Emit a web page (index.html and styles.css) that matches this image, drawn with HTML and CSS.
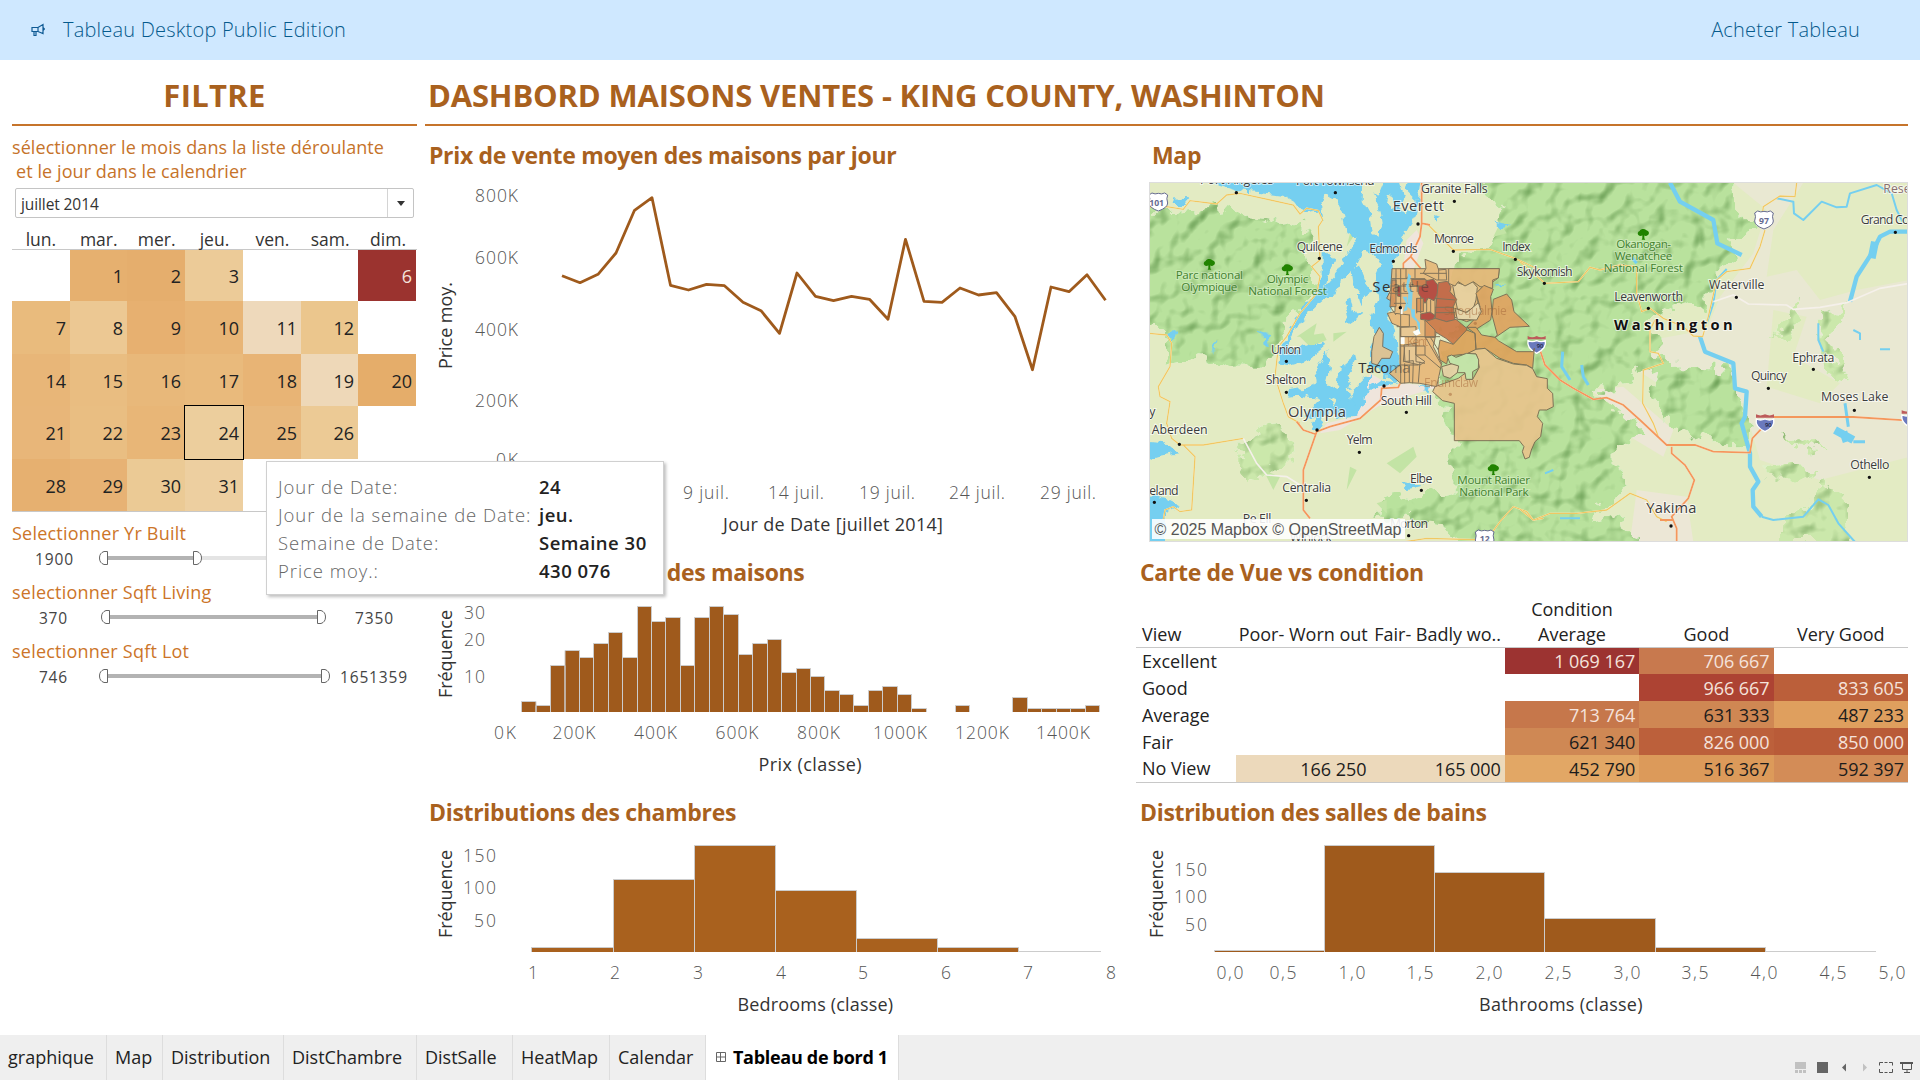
FILE: index.html
```html
<!DOCTYPE html>
<html lang="fr">
<head>
<meta charset="utf-8">
<title>Tableau de bord 1</title>
<link rel="stylesheet" href="styles.css">
</head>
<body>
<header class="banner">
  <svg class="horn" width="14" height="14" viewBox="0 0 14 14"><path d="M1 4.5H7L12 1.5V10.5L7 8.5H1ZM3 8.5V12.5H5V8.5M7 4.5V8.5M12 4.5L13.5 6L12 7.5"/></svg>
  <span class="banner-title">Tableau Desktop Public Edition</span>
  <a class="buy">Acheter Tableau</a>
</header>
<main class="dash">
  <aside class="side">
    <h1 class="side-title">FILTRE</h1>
    <p class="hint"><span class="hint-a">sélectionner le mois dans la liste déroulante</span><br><span class="hint-b">et le jour dans le calendrier</span></p>
    <div class="select"><span class="select-value">juillet 2014</span><span class="select-arrow"><i></i></span></div>
    <div class="days"><span>lun.</span><span>mar.</span><span>mer.</span><span>jeu.</span><span>ven.</span><span>sam.</span><span>dim.</span></div>
    <div class="cal">
      <b></b><b style="background:#e6b06f">1</b><b style="background:#e5ae6d">2</b><b style="background:#eccb98">3</b><b></b><b></b><b class="light" style="background:#9b332f">6</b>
      <b style="background:#e9bb7d">7</b><b style="background:#ecc893">8</b><b style="background:#e7b070">9</b><b style="background:#e8b576">10</b><b style="background:#eed9bb">11</b><b style="background:#ebc68d">12</b><b></b>
      <b style="background:#e8b678">14</b><b style="background:#e9bd81">15</b><b style="background:#e8b87a">16</b><b style="background:#e9ba7c">17</b><b style="background:#e8b475">18</b><b style="background:#eed8b8">19</b><b style="background:#e5ad6a">20</b>
      <b style="background:#e8b679">21</b><b style="background:#e9be82">22</b><b style="background:#e8b677">23</b><b class="picked" style="background:#ecce9d">24</b><b style="background:#e8b87c">25</b><b style="background:#ecca95">26</b><b></b>
      <b style="background:#e6b070">28</b><b style="background:#e7b274">29</b><b style="background:#ebca95">30</b><b style="background:#edcfa0">31</b><b></b><b></b><b></b>
    </div>
    <section class="range">
      <h3 class="r1">Selectionner Yr Built</h3>
      <svg width="405" height="26" viewBox="12 545 405 26"><path class="rail" d="M193 558H310"/><path class="span" d="M107 558H193"/><path class="grip" d="M107.500 551.500V564.500H104Q99.500 563 99.500 558T104 551.500ZM193.500 551.500V564.500H197Q201.500 563 201.500 558T197 551.500Z"/><text x="35" y="565" textLength="38">1900</text></svg>
    </section>
    <section class="range">
      <h3 class="r2">selectionner Sqft Living</h3>
      <svg width="405" height="26" viewBox="12 545 405 26"><path class="span" d="M109 558H317"/><path class="grip" d="M109.500 551.500V564.500H106Q101.500 563 101.500 558T106 551.500ZM317.500 551.500V564.500H321Q325.500 563 325.500 558T321 551.500Z"/><text x="39" y="565" textLength="28">370</text><text x="355" y="565" textLength="38">7350</text></svg>
    </section>
    <section class="range">
      <h3 class="r3">selectionner Sqft Lot</h3>
      <svg width="405" height="26" viewBox="12 545 405 26"><path class="span" d="M107 558H321"/><path class="grip" d="M107.500 551.500V564.500H104Q99.500 563 99.500 558T104 551.500ZM321.500 551.500V564.500H325Q329.500 563 329.500 558T325 551.500Z"/><text x="39" y="565" textLength="28">746</text><text x="340" y="565" textLength="67">1651359</text></svg>
    </section>
  </aside>

  <div class="content">
    <h1 class="main-title"><span>DASHBORD MAISONS VENTES - KING COUNTY, WASHINTON</span></h1>
    <div class="panels">
      <section class="panel">
        <h2 class="t1">Prix de vente moyen des maisons par jour</h2>
        <svg class="chart" width="711" height="370" viewBox="425 182 711 370">
          <g class="tick">
            <text x="475" y="202" textLength="43">800K</text><text x="475" y="264" textLength="43">600K</text><text x="475" y="336" textLength="43">400K</text><text x="475" y="407" textLength="43">200K</text><text x="496" y="466" textLength="22">0K</text>
            <text x="683" y="499" textLength="46">9 juil.</text><text x="768" y="499" textLength="56">14 juil.</text><text x="859" y="499" textLength="56">19 juil.</text><text x="949" y="499" textLength="56">24 juil.</text><text x="1040" y="499" textLength="56">29 juil.</text>
          </g>
          <text class="axis" x="723" y="531" textLength="220">Jour de Date [juillet 2014]</text>
          <text class="axis" transform="translate(451.500 369) rotate(-90)" textLength="87">Price moy.</text>
          <polyline class="line" points="562,275.7 580,282.7 598,274.3 616,253 634.500,210.3 652,197.7 670.500,285.3 688.500,290 706.500,284.3 724.500,285.7 743,302.3 761,310.7 779.500,333.3 797,273 815.500,296.3 833.500,300.7 851.500,296.3 869.500,299.3 888,319.3 905.500,239.3 924,301.3 942,302.3 960,288 978.500,295 996.500,292.7 1015,316.7 1032.500,369.7 1051,287 1069,291.7 1087,274.7 1105.500,300.3"/>
        </svg>
      </section>

      <section class="panel">
        <h2 class="tm">Map</h2>
        <svg class="map" width="759" height="360" viewBox="1149 182 759 360">
          <defs>
            <filter id="relief" x="0" y="0" width="100%" height="100%" color-interpolation-filters="sRGB">
              <feTurbulence type="fractalNoise" baseFrequency="0.060" numOctaves="3" seed="3" result="e"/>
              <feDisplacementMap in="SourceGraphic" in2="e" scale="30" xChannelSelector="R" yChannelSelector="G" result="d"/>
              <feTurbulence type="fractalNoise" baseFrequency="0.050" numOctaves="2" seed="8" result="n"/>
              <feDiffuseLighting in="n" surfaceScale="6" diffuseConstant="1.170" lighting-color="#fff" result="l"><feDistantLight azimuth="225" elevation="60"/></feDiffuseLighting>
              <feComponentTransfer in="l" result="m"><feFuncR type="linear" slope=".6" intercept=".4"/><feFuncG type="linear" slope=".42" intercept=".58"/><feFuncB type="linear" slope=".65" intercept=".35"/></feComponentTransfer>
              <feComposite in="m" in2="d" operator="in" result="s"/>
              <feBlend in="d" in2="s" mode="multiply"/>
            </filter>
            <filter id="shore" x="-5%" y="-5%" width="110%" height="110%">
              <feTurbulence type="fractalNoise" baseFrequency="0.120" numOctaves="2" seed="5" result="e"/>
              <feDisplacementMap in="SourceGraphic" in2="e" scale="9" xChannelSelector="R" yChannelSelector="G"/>
            </filter>
            <g id="tree"><path d="M0-15C8-15 9-10 14-9C19-4 17 3 10 5C6 7 4 5 3 4V13L6 17H-5L-3 13V4C-6 7-12 6-15 3C-19-3-15-8-11-9C-9-14-5-15 0-15Z"/></g>
            <g id="i90"><path d="M-26-10Q-14-4 0-10Q14-4 26-10Q31 13 0 28Q-31 13-26-10Z" fill="#6a79bd" stroke="#fff" stroke-width="4"/><path d="M-27-14V-24Q-14-17 0-24Q14-17 27-24V-14Z" fill="#bd5b5b"/><text y="13" class="shield-w">90</text></g>
            <g id="us"><path d="M-28-22L-19-28Q-10-23 0-27Q10-23 19-28L28-22Q23-12 28 2Q28 16 0 26Q-28 16-28 2Q-23-12-28-22Z" fill="#fff" stroke="#666b91" stroke-width="3"/></g>
          </defs>
          <rect x="1149" y="182" width="759" height="360" fill="#e3ebc3"/>
          <g transform="translate(1520 170) scale(.333333)">
            <path fill="#e9e8d2" d="M640 38H1170V860L900 930L720 870L670 700L430 650L350 600L340 520L560 480L600 380L700 250L740 120Z"/>
            <path fill="#e3ebc3" d="M850 38H1170V330L1010 360L900 390L830 300L740 320L760 180ZM760 420L860 440L820 560L960 640L900 700L740 650ZM430 850L690 870L700 1000L560 1110H450L520 980Z"/>
            <path fill="#ece7d6" d="M210 660L310 650L460 780L430 860L330 800L300 720ZM350 960L500 980L520 1116H330Z"/>
          </g>
          <g filter="url(#relief)">
            <g transform="translate(1140 170) scale(.333333)">
              <path fill="#b9e29d" d="M0 130L100 125L250 105L310 140L480 170L520 300L530 370L460 440L390 560L370 590H250L220 550L70 580L95 500L0 480Z"/>
              <path fill="#b9e29d" d="M1000 0H1210V1160H960L900 1060L720 1040L730 990L940 960V820L900 680L940 400L960 260L1050 220L1080 120Z"/>
              <path fill="#cbe8ab" d="M290 830L390 770L450 790L460 870L420 910L360 890L310 930Z"/>
            </g>
            <g transform="translate(1520 170) scale(.333333)">
              <path fill="#b9e29d" d="M0 0H640L650 100L690 170L600 290L560 400L460 410L390 460L400 530L470 600L620 590L680 690L690 820L560 820L460 760L400 700L420 620L350 580L340 640L220 660L300 730L380 800L290 830L290 900L320 960L230 1010L220 1060L310 1030L360 1160H0Z"/>
              <path fill="#cbe8ab" d="M780 1060L850 1000L920 940L970 980L980 1110H780ZM730 890L850 880L900 920L730 920ZM780 780L890 830L930 850L820 820ZM780 480L840 380L830 470L770 510ZM900 440L990 400L930 490L980 640L950 620L890 500Z"/>
            </g>
          </g>
          <g transform="translate(1140 170) scale(.333333)">
            <path fill="#efe5dc" d="M830 180L850 220L820 300L790 290L800 210ZM690 610L760 650L790 640L900 650L730 700L600 780L540 790L560 760L640 740Z"/>
            <g fill="#c3e4a5"><path d="M480 500L550 490L560 510L510 530ZM580 490L620 485L580 515ZM470 500L530 460L520 500ZM370 900L420 920L400 960ZM630 890L650 900L620 960ZM740 880L820 830L830 860L780 910ZM710 1000L740 990V1030ZM640 150L660 170L620 230ZM1080 160L1100 190L1060 200Z"/></g>
          </g>
          <g filter="url(#shore)"><g transform="translate(1140 170) scale(.333333)">
            <g fill="#74cff0">
              <path d="M150 20H845L832 130L800 185L785 215L758 290L770 320L742 360L765 400L742 430L765 480L770 540L785 590L770 640L735 620L715 590L690 600L690 540L705 500L690 445L715 390L705 320L720 285L700 250L670 240L650 200L620 190L610 140L590 90L555 70L540 110L548 150L530 125L490 130L465 95L430 75L350 65L290 60L240 45Z"/>
              <path d="M660 190L675 230L640 300L600 330L590 375L550 385L500 430L462 485L440 530L470 540L550 515L555 525L500 570L445 585L415 580L425 530L450 480L480 430L525 370L545 330L545 250L570 250L580 270L555 350L590 310L635 230Z"/>
              <path d="M635 300L660 285L670 330L700 370L670 380L640 340ZM610 390L630 380L640 430L670 430L625 460ZM655 375L670 370L665 410Z"/>
              <path d="M560 540L570 600L560 640L590 660L600 590L645 555L650 575L620 620L640 660L690 610L690 650L720 630L780 640L690 655L650 740L600 745L560 720L540 770L510 780L525 740L490 745L540 690L500 675L445 680L530 640L525 600L545 570Z"/>
              <path d="M440 660L480 655L500 680L450 675ZM600 690L640 700L620 730L590 720Z"/>
              <path d="M10 815L80 820L115 850L60 860L10 875ZM10 970L90 990L120 1005L75 1030V1140H10ZM80 490L110 480L105 500L88 508ZM340 475L385 490V530L375 530L370 495ZM220 520L232 510L220 555ZM785 935L850 950L800 960ZM835 640L870 655L865 675ZM1065 155L1115 165L1085 175ZM885 135L900 140L890 155ZM1070 345H1098L1070 350ZM100 85L145 88L130 105H95Z"/>
            </g>
            <g fill="#e3ebc3"><path d="M670 20H740L715 80L700 70L720 110L728 160L712 185L720 205L700 195L690 130L668 90ZM770 20H810L800 60L830 90L800 130L775 110L790 80ZM740 70L765 80L760 120L735 100ZM575 560L590 550L585 620ZM620 655L650 650L630 690ZM570 680L590 690L580 710Z"/></g>
          </g></g>
          <g transform="translate(1140 170) scale(.333333)">
            <g class="yroad">
              <path d="M28 112L80 110L130 118L150 92L230 102L260 75L300 70L460 105L480 132L500 115L535 122L548 150L535 170L540 270L515 290L540 320L530 370L480 430L440 500L415 530L405 620L430 700L445 740L480 760M28 490L80 495L95 520L90 590L55 650L60 680L90 695L80 760L95 805L120 825L190 825L310 805M130 825L165 860L155 1020L120 1025L100 1010L75 1020L70 1050M860 160L900 200L940 240L1050 238L1125 265L1200 300M790 1116L860 1105L1040 1110L1080 1055L1120 1010L1160 1025L1180 1050L1210 1045"/>
            </g>
            <path class="wroad" d="M310 805L350 880L380 915L440 920L480 945"/>
            <g class="oroad"><path d="M845 38V160L840 200L812 260L790 280V300M812 260L842 295M847 160L870 165M780 640L775 652L725 655L722 690L660 745L570 770L530 785L490 900L490 1020L510 1045M525 792L490 780L470 755"/></g>
          </g>
          <g transform="translate(1520 170) scale(.333333)">
            <g class="river"><path stroke-width="13" d="M450 38L480 95L580 150L592 220L665 255M540 500L555 545L640 580L645 655L680 665L675 740L665 760L690 850L690 890L715 935L698 960L700 1010L725 1040"/><path stroke-width="6" d="M620 297L590 330L580 400L560 460M725 1040L760 1050L850 1040L895 988L925 1005L955 1060L1005 1116M770 85L820 95L822 130L850 150L905 95L950 112L980 110L990 70L1070 45L1115 70L1130 120L1150 160M895 460V510L910 545M1000 480L1020 490V510M1080 538H1110M75 910L100 900M120 1045H180"/><path stroke-width="13" d="M1170 185H1110L1080 200L1055 250L1010 320L990 395"/><path stroke-width="24" d="M1065 215L1055 265M945 780L1000 810M970 785L980 815"/><path stroke-width="9" d="M128 545L125 590L150 630M185 585L190 620L205 645M975 700L985 770M1000 815H1035M335 262L350 280"/></g>
            <g class="yroad"><path d="M830 38L825 80L780 78L730 110L728 125M735 180L720 230L690 295L620 305L590 330L565 440L548 500L520 498L490 470L430 445L390 415L365 425L350 370V290L300 285L240 300L210 292L175 335L75 340L0 275M405 450L390 480V545L415 550L430 580L370 600L368 700L400 760L415 800M0 1018L40 1050L90 1030H170L260 1020L330 970L380 990L410 1040L440 1055"/></g>
            <path class="wroad" d="M580 395L640 375L685 402L800 405L820 418L900 412L980 398L1080 355L1170 340"/>
            <g class="oroad"><path d="M60 540L75 585L120 630L160 655L220 688L260 683L310 705L360 750L440 825H525L580 845L690 848L697 805L735 765M760 741H1000L1170 752M455 830V850L495 885L523 930L505 985L455 1040L470 1075V1116M420 1050H460"/></g>
          </g>

          <g transform="translate(1140 170) scale(.333333)" class="labels">
            <g fill="#218300"><use href="#tree" x="208" y="282"/><use href="#tree" x="442" y="298"/><use href="#tree" x="1060" y="898"/></g>
            <g class="park"><text x="107" y="326" textLength="202">Parc national</text><text x="124" y="363" textLength="168">Olympique</text><text x="380" y="339" textLength="125">Olympic</text><text x="325" y="376" textLength="236">National Forest</text><text x="952" y="941" textLength="218">Mount Rainier</text><text x="958" y="978" textLength="208">National Park</text></g>
            <text x="180" y="42" textLength="220">Port Angeles</text><text x="468" y="45" textLength="236">Port Townsend</text>
            <text x="843" y="69" textLength="200">Granite Falls</text><text x="470" y="242" textLength="138">Quilcene</text><text x="688" y="250" textLength="145">Edmonds</text><text x="882" y="220" textLength="120">Monroe</text><text x="1087" y="243" textLength="84">Index</text>
            <text x="393" y="551" textLength="90">Union</text><text x="377" y="643" textLength="122">Shelton</text><text x="722" y="704" textLength="154">South Hill</text><text x="620" y="822" textLength="78">Yelm</text><text x="35" y="793" textLength="168">Aberdeen</text><text x="427" y="966" textLength="146">Centralia</text><text x="810" y="938" textLength="67">Elbe</text><text x="28" y="974" textLength="88">eland</text><text x="28" y="738">y</text><text x="750" y="1073" textLength="114">Morton</text><text x="308" y="1060" textLength="86">Pe Ell</text><text x="450" y="1115" textLength="126">Winlock</text>
            <g class="city"><text x="758" y="123" textLength="154">Everett</text><text x="444" y="742" textLength="174">Olympia</text></g>
            <g class="dot"><path d="M289 68h.1M586 68h.1M943 94h.1M538 265h.1M760 274h.1M940 244h.1M1126 268h.1M439 574h.1M439 667h.1M799 727h.1M658 847h.1M118 823h.1M499 991h.1M844 961h.1M43 997h.1M806 1097h.1"/><path stroke-width="13" d="M834 162h.1M732 648h.1M531 780h.1"/></g>
            <use href="#us" x="55" y="97"/><text x="28" y="108" class="shield-g" textLength="44">101</text>
            <use href="#us" x="1034" y="1108"/><text x="1019" y="1116" class="shield-g" textLength="30">12</text>
          </g>
          <g transform="translate(1520 170) scale(.333333)" class="labels">
            <g fill="#218300"><use href="#tree" x="370" y="192"/></g>
            <g class="park"><text x="289" y="235" textLength="164">Okanogan-</text><text x="284" y="271" textLength="173">Wenatchee</text><text x="251" y="307" textLength="238">National Forest</text></g>
            <text x="-10" y="317" textLength="168">Skykomish</text><text x="283" y="392" textLength="206">Leavenworth</text><text x="567" y="358" textLength="166">Waterville</text><text x="1022" y="163" textLength="210">Grand Coulee</text><text x="817" y="576" textLength="126">Ephrata</text><text x="693" y="630" textLength="108">Quincy</text><text x="903" y="693" textLength="202">Moses Lake</text><text x="991" y="897" textLength="117">Othello</text>
            <text x="1090" y="69" class="rese">Reserve</text>
            <g class="city"><text x="379" y="1030" textLength="150">Yakima</text></g>
            <text class="state" x="282" y="480" textLength="356">Washington</text>
            <g class="dot"><path d="M73 340h.1M385 415h.1M649 382h.1M1126 187h.1M880 598h.1M745 655h.1M1003 721h.1M1048 922h.1"/><path stroke-width="13" d="M453 1068h.1"/></g>
            <use href="#us" x="732" y="151"/><text x="717" y="163" class="shield-g" textLength="30">97</text>
            <use href="#i90" x="735" y="757"/><use href="#i90" x="1172" y="745"/><use href="#i90" x="50" y="522"/>
          </g>

          <g transform="translate(1370 250) scale(.333333)" class="zips">
            <path fill="#e8b878" d="M66 56H388L385 84L368 96L366 113L340 108L320 130L330 200L290 215L250 200L205 215L190 290L215 340L200 410L150 400L118 398L92 400L58 370L90 345V230L66 220L52 190L75 185V160L50 145L62 120Z"/>
            <path fill="#edcf9f" d="M248 106L262 98L280 104L305 92L322 112L318 150L310 175L285 188L262 176Z"/>
            <path fill="#e6b778" d="M236 56H388L385 84L368 90L368 115L330 110L310 95L285 108L265 95L255 108L236 100ZM165 28L200 42L206 60L228 58L230 90L200 90L160 70L168 55Z"/>
            <path fill="#e0a260" d="M318 130L342 106L370 118L362 140L366 185L362 210L318 238L290 232L320 200L330 170ZM410 132L425 150L432 185L478 229L420 232L372 265L382 255L366 195L370 148Z"/>
            <path fill="#eed7ae" d="M255 175L290 188L325 158L334 185L320 210L262 208Z"/>
            <path fill="#b23f37" d="M168 92L190 88L203 105V130L192 152L175 144L165 160L145 130V105ZM152 192L180 186L195 196L188 213L152 208ZM82 110L92 108V140L82 138Z"/>
            <path fill="#c0603f" d="M205 98L232 94L243 110L240 125L260 148L250 170L255 210L228 215L195 205L200 145Z"/>
            <path fill="#cb7644" d="M125 88H168V108H128ZM196 205L230 215L258 208L290 235V248L250 283L228 265L190 242L165 215Z"/>
            <path fill="#dfa25b" d="M210 270L250 283L290 240L315 250L318 300L290 312L235 318L230 342L210 330L205 300ZM290 232H318L335 255L375 262L385 272L440 305H490L493 295L488 355L470 345L430 340L390 325L345 295L318 298L315 250Z"/>
            <path fill="#e9c48c" d="M318 298L345 295L380 325L430 342L470 346L488 356L500 380L532 386L532 415L548 430L550 470L530 480H508L502 500L518 520L512 560L495 575L484 600L478 622L465 627L457 605L462 590L448 572H253V460L218 452L188 425L195 410L265 385L285 370L290 388H308L328 352L323 325L318 312L290 312Z"/>
            <path fill="#ead2a7" d="M215 350L250 340L268 348L262 368L240 385L220 378Z"/>
            <path fill="#e7c28c" d="M28 232L40 250L38 290L68 305L60 325L35 325L22 345L5 340V305L12 260Z"/>
            <path fill="#c5e5aa" d="M232 320L245 315L258 322L290 310L318 312L326 330L325 355L308 365L308 388H288L285 368L262 368L266 348L240 340Z"/>
            <path fill="#e9c590" d="M102 285L138 280L137 315L165 335L150 345L105 335ZM92 232L138 230V260H92Z"/>
            <path fill="#d98f52" d="M66 90H78V170H60ZM165 210L195 240V262H165ZM140 145H160V185H140Z"/>
            <path fill="none" d="M78 56V135M92 56V400M108 56V86L120 75M135 56V84M66 86H165M62 108H125M58 130H120M72 160H115M75 190L120 195M80 230H118M90 260H210M90 288H165V315H138M104 290L100 335L130 332L128 400M138 260V335L165 340M150 335L145 398M165 260L215 345M180 260L205 300M118 300V338M118 195V230M140 145V190M152 140V190M170 145V190M182 150V190M195 145V205M195 145L255 150M195 172H250M198 188H255M150 70H230M206 60V90M90 345H145M165 315L212 355M104 340V400M118 345V398M60 170L78 195M120 110L145 108"/>
            <path fill="#74cff0" d="M115 70L123 78L120 90L116 110L128 125L125 180L112 170L115 130L108 110ZM122 178H135V200L150 220V245L132 255L145 235L140 215L125 200ZM98 140H112V180L100 185L108 160Z" stroke="none"/>
            <path fill="#fff" d="M92 172h6v20h-6zM92 262h12v20H92zM128 245l18-8 6 14-14 6z" stroke="none"/>
          </g>
          <g transform="translate(1140 170) scale(.333333)" class="veiled">
            <text x="912" y="435" textLength="188">Snoqualmie</text><text x="852" y="650" textLength="162">Enumclaw</text><text x="800" y="528" textLength="64">Kent</text>
            <circle cx="1006" cy="460" r="5"/><circle cx="931" cy="673" r="5"/>
          </g>
          <g transform="translate(1140 170) scale(.333333)" class="metro">
            <text x="697" y="367" textLength="170">Se<tspan class="fade">attle</tspan></text>
            <text x="655" y="610" textLength="156">Taco<tspan class="fade">ma</tspan></text>
          </g>
          <g transform="translate(1140 170) scale(.333333)" class="dot"><path stroke-width="13" d="M781 413h.1"/></g>
          <rect x="1152" y="519" width="253" height="20" fill="#fff" opacity=".88"/>
          <text x="1154.500" y="535" class="credit" textLength="247">© 2025 Mapbox © OpenStreetMap</text>
          <rect x="1149.500" y="182.500" width="758" height="359" fill="none" stroke="#ddd"/>
        </svg>
      </section>

      <section class="panel">
        <h2 class="t2">Distribution des prix des maisons</h2>
        <svg class="chart" width="711" height="198" viewBox="425 592 711 198">
          <g class="tick">
            <text x="464" y="619" textLength="21">30</text><text x="464" y="646" textLength="21">20</text><text x="464" y="683" textLength="21">10</text>
            <text x="494" y="739" textLength="22">0K</text><text x="552.500" y="739" textLength="43">200K</text><text x="634" y="739" textLength="43">400K</text><text x="715.500" y="739" textLength="43">600K</text><text x="797" y="739" textLength="43">800K</text><text x="873" y="739" textLength="54">1000K</text><text x="955" y="739" textLength="54">1200K</text><text x="1036" y="739" textLength="54">1400K</text>
          </g>
          <text class="axis" x="758.500" y="770.500" textLength="103">Prix (classe)</text>
          <text class="axis" transform="translate(451.500 698) rotate(-90)" textLength="88">Fréquence</text>
          <path class="bars" d="M521.500 712V701.500H536V712M536 712V705.500H550.500V712M550.500 712V665.500H565V712M565 712V650.500H579.500V712M579.500 712V657.500H593.500V712M593.500 712V643.500H608.500V712M608.500 712V632.500H622.500V712M622.500 712V657.500H637.500V712M637.500 712V606.500H651.500V712M651.500 712V621.500H665.500V712M665.500 712V617.500H680.500V712M680.500 712V665.500H694.500V712M694.500 712V617.500H709.500V712M709.500 712V606.500H723.500V712M723.500 712V614.500H738.500V712M738.500 712V654.500H752.500V712M752.500 712V643.500H767.500V712M767.500 712V639.500H781.500V712M781.500 712V672.500H796.500V712M796.500 712V668.500H810.500V712M810.500 712V676.500H824.500V712M824.500 712V690.500H839.500V712M839.500 712V694.500H853.500V712M853.500 712V705.500H868.500V712M868.500 712V690.500H882.500V712M882.500 712V686.500H897.500V712M897.500 712V694.500H911.500V712M911.500 712V708.500H926.500V712M955.500 712V705.500H969.500V712M1012.500 712V697.500H1027.500V712M1027.500 712V708.500H1041.500V712M1041.500 712V708.500H1056.500V712M1056.500 712V708.500H1070.500V712M1070.500 712V708.500H1085.500V712M1085.500 712V705.500H1099.500V712"/>
        </svg>
      </section>

      <section class="panel">
        <h2 class="t3">Carte de Vue vs condition</h2>
        <table class="heat">
          <tr class="cond"><th></th><th></th><th></th><th>Condition</th><th></th><th></th></tr>
          <tr class="head"><th>View</th><th><span>Poor- Worn out</span></th><th><span>Fair- Badly wo..</span></th><th>Average</th><th>Good</th><th>Very Good</th></tr>
          <tr><th>Excellent</th><td></td><td></td><td class="light" style="background:#9c3331">1 069 167</td><td class="light" style="background:#c8794e">706 667</td><td></td></tr>
          <tr><th>Good</th><td></td><td></td><td></td><td class="light" style="background:#ad4333">966 667</td><td class="light" style="background:#bb5f3a">833 605</td></tr>
          <tr><th>Average</th><td></td><td></td><td class="light" style="background:#c6774b">713 764</td><td style="background:#cf8753">631 333</td><td style="background:#df9f5e">487 233</td></tr>
          <tr><th>Fair</th><td></td><td></td><td style="background:#cf8854">621 340</td><td class="light" style="background:#bc603b">826 000</td><td class="light" style="background:#b95b38">850 000</td></tr>
          <tr><th>No View</th><td style="background:#ecd9bb">166 250</td><td style="background:#ecd9bb">165 000</td><td style="background:#e2a765">452 790</td><td style="background:#dc9a5a">516 367</td><td style="background:#d38c57">592 397</td></tr>
        </table>
      </section>

      <section class="panel">
        <h2 class="t4">Distributions des chambres</h2>
        <svg class="chart" width="711" height="201" viewBox="425 834 711 201">
          <g class="tick">
            <text x="463" y="861.500" textLength="33">150</text><text x="463" y="893.500" textLength="33">100</text><text x="474" y="926.500" textLength="22">50</text>
            <g class="mid"><text x="533" y="979">1</text><text x="615" y="979">2</text><text x="698" y="979">3</text><text x="781" y="979">4</text><text x="863" y="979">5</text><text x="946" y="979">6</text><text x="1028" y="979">7</text><text x="1111" y="979">8</text></g>
          </g>
          <text class="axis" x="737.500" y="1011" textLength="155.500">Bedrooms (classe)</text>
          <text class="axis" transform="translate(451.500 938) rotate(-90)" textLength="88">Fréquence</text>
          <path class="bars bed" d="M531.500 952V947.500H613.500V952M613.500 952V879.500H694.500V952M694.500 952V845.500H775.500V952M775.500 952V890.500H856.500V952M856.500 952V938.500H937.500V952M937.500 952V947.500H1018.500V952M1018.500 951.500H1101"/>
        </svg>
      </section>

      <section class="panel">
        <h2 class="t5">Distribution des salles de bains</h2>
        <svg class="chart" width="772" height="201" viewBox="1136 834 772 201">
          <g class="tick">
            <text x="1174" y="875.500" textLength="33">150</text><text x="1174" y="902.500" textLength="33">100</text><text x="1185" y="930.500" textLength="22">50</text>
            <g class="mid"><text x="1230" y="979" textLength="27">0,0</text><text x="1283" y="979" textLength="27">0,5</text><text x="1352" y="979" textLength="27">1,0</text><text x="1420" y="979" textLength="27">1,5</text><text x="1489" y="979" textLength="27">2,0</text><text x="1558" y="979" textLength="27">2,5</text><text x="1627" y="979" textLength="27">3,0</text><text x="1695" y="979" textLength="27">3,5</text><text x="1764" y="979" textLength="27">4,0</text><text x="1833" y="979" textLength="27">4,5</text><text x="1892" y="979" textLength="27">5,0</text></g>
          </g>
          <text class="axis" x="1479" y="1011" textLength="163.500">Bathrooms (classe)</text>
          <text class="axis" transform="translate(1162.500 938) rotate(-90)" textLength="88">Fréquence</text>
          <path class="bars" d="M1214.500 952V950.500H1324.500V952M1324.500 952V845.500H1434.500V952M1434.500 952V872.500H1544.500V952M1544.500 952V918.500H1655.500V952M1655.500 952V947.500H1765.500V952M1765.500 951.500H1876"/>
        </svg>
      </section>
    </div>
  </div>
</main>

<div class="tip">
  <span class="k1">Jour de Date:</span><b>24</b>
  <span class="k2">Jour de la semaine de Date:</span><b>jeu.</b>
  <span class="k3">Semaine de Date:</span><b>Semaine 30</b>
  <span class="k4">Price moy.:</span><b>430 076</b>
</div>

<footer class="tabs">
  <span class="w1">graphique</span><span class="w2">Map</span><span class="w3">Distribution</span><span class="w4">DistChambre</span><span class="w5">DistSalle</span><span class="w6">HeatMap</span><span class="w7">Calendar</span>
  <span class="on"><svg width="12" height="12" viewBox="0 0 12 12"><path d="M1.500 1.500H10.500V10.500H1.500ZM1.500 6H10.500M5.500 1.500V10.500" fill="none" stroke="#666"/></svg>Tableau de bord 1</span>
  <svg class="tools" width="130" height="45" viewBox="1790 1035 130 45">
    <path fill="#c1c1c1" d="M1795 1062h11v7h-11zM1795 1070h3v3h-3zM1799 1070h3v3h-3zM1803 1070h3v3h-3zM1863 1063.500l4 4-4 4z"/>
    <path fill="#656565" d="M1817 1062h11v11h-11zM1846 1063.500v8l-4-4z"/>
    <path fill="none" stroke="#555" d="M1879.500 1065.500V1062.500H1883M1889 1062.500H1892.500V1065.500M1892.500 1069V1072.500H1889M1883 1072.500H1879.500V1069M1884.500 1062.500h3M1884.500 1072.500h3M1902.500 1064V1069.500H1911.500V1064M1907 1070V1073M1904 1072.500H1910"/>
    <path fill="#555" d="M1900 1062h13v2h-13z"/>
  </svg>
</footer>
</body>
</html>
```
FILE: styles.css
```css
* { box-sizing: border-box; }
body {
  margin: 0;
  width: 1920px;
  height: 1080px;
  overflow: hidden;
  display: flex;
  flex-direction: column;
  position: relative;
  background: #fff;
  color: #333;
  font-family: "Open Sans", "Noto Sans", sans-serif;
  font-size: 17px;
}
h1, h2, h3, p { margin: 0; }
svg { display: block; }
.banner {
  height: 60px;
  display: flex;
  align-items: center;
  padding: 0 60px 2px 31px;
  background: #cfe8ff;
  color: #055a8c;
  font-size: 20px;
  font-weight: 350;
  letter-spacing: .2px;
}
.horn { fill: none; stroke: #0f5a94; stroke-width: 1.2; margin: 2px 18px 0 0; }
.buy { margin-left: auto; }
.dash {
  height: 975px;
  display: grid;
  grid-template-columns: 405px 1483px;
  column-gap: 8px;
  padding: 0 12px;
}
.side-title, .main-title {
  height: 66px;
  line-height: 70px;
  border-bottom: 2px solid #c6742b;
  color: #a9611e;
  font-size: 31px;
  font-weight: 700;
  white-space: nowrap;
}
.side-title { text-align: center; letter-spacing: .3px; }
.main-title { padding-left: 3px; letter-spacing: -.18px; }
.hint { padding-top: 9px; line-height: 24px; color: #c6732a; font-weight: 500; font-size: 18px; letter-spacing: .08px; white-space: nowrap; }
.hint-b { margin-left: 4px; }
.select {
  height: 30px;
  margin: 5px 3px 0;
  border: 1px solid #c4c4c4;
  border-radius: 2px;
  display: flex;
  justify-content: space-between;
  line-height: 31px;
  font-size: 15.5px;
  letter-spacing: -.1px;
  padding-left: 5px;
}
.select-arrow { width: 26px; border-left: 1px solid #d4d4d4; display: grid; place-items: center; }
.select-arrow i { border: 4px solid transparent; border-top: 5px solid #333; border-bottom: 0; }
.days {
  display: grid;
  grid-template-columns: repeat(7, 1fr);
  padding-top: 11px;
  line-height: 20px;
  text-align: center;
  border-bottom: 1px solid #c8c8c8;
  font-weight: 500;
  font-size: 17.5px;
}
.cal {
  display: grid;
  grid-template-columns: 58px 57px 58px 58px 58px 57px 58px;
  grid-template-rows: 51px 53px 52px 53px 52px;
  border-bottom: 1px solid #c8c8c8;
}
.cal b {
  display: flex;
  align-items: center;
  justify-content: flex-end;
  padding: 1px 4px 0 0;
  font-weight: 400;
  font-size: 18px;
  color: #222;
}
.cal .picked { outline: 1px solid #000; z-index: 1; }
.cal .light, .heat .light { color: #f5e3dc; }
.range { height: 59px; padding-top: 9px; }
.range h3 { line-height: 24px; font-size: 18px; letter-spacing: .22px; font-weight: 500; color: #cc7529; }
.range text { font-size: 15.5px; fill: #444; }
.rail { stroke: #e4e4e4; stroke-width: 4; }
.span { stroke: #b3b3b3; stroke-width: 4; }
.grip { fill: #fff; stroke: #666; }
.panels {
  display: grid;
  grid-template-columns: 711px 772px;
  grid-template-rows: 426px 238px 245px;
}
.panel h2 { height: 40px; line-height: 41px; padding-left: 4px; font-size: 23px; letter-spacing: -.32px; font-weight: 700; color: #a9611e; white-space: nowrap; }
.panel .t1, .panel .tm { height: 56px; line-height: 59px; }
.panel .tm { padding-left: 16px; }
.panel .t2 { padding-left: 7px; }
.panel .t4, .panel .t5 { height: 44px; line-height: 45px; }
.tick text { font-size: 17.5px; font-weight: 300; fill: #555; }
.mid text { text-anchor: middle; }
.axis { font-size: 18px; font-weight: 500; fill: #333; }
.line { fill: none; stroke: #9f5a1c; stroke-width: 2.8; stroke-linejoin: round; }
.bars { fill: #9f5a1c; stroke: #ccc; }
.bed { fill: #a9611e; }
.map { margin-left: 13px; }
.yroad path { fill: none; stroke: #f0c863; stroke-width: 4; filter: drop-shadow(0 0 1.5px #fff); }
.oroad path { fill: none; stroke: #f4975c; stroke-width: 5.5; filter: drop-shadow(0 0 1.5px #fff); }
.wroad { fill: none; stroke: #f5f0ea; stroke-width: 5; }
.river path { fill: none; stroke: #74cff0; stroke-linejoin: round; }
.labels text { font-size: 37px; fill: #3c3c3c; paint-order: stroke; stroke: #fff; stroke-opacity: .65; stroke-width: 6; font-weight: 500; }
.labels .park text { fill: #43822f; stroke-opacity: .3; font-size: 35px; }
.labels .rese { fill: #8a7070; }
.labels .city text { font-size: 44px; }
.labels .state { font-size: 44px; font-weight: 700; fill: #111; }
.metro text { font-size: 45px; fill: #333; }
.metro .fade { fill-opacity: .45; }
.dot path { stroke: #111; stroke-width: 10; stroke-linecap: round; }
.labels .shield-w { font-size: 26px; font-weight: 700; fill: #fff; stroke: none; text-anchor: middle; }
.labels .shield-g { font-size: 26px; font-weight: 700; fill: #666b91; stroke: none; }
.veiled { fill: #a5673a; opacity: .5; font-size: 36px; }
.zips { opacity: .9; }
.zips path { stroke: #77664f; stroke-width: 3; stroke-linejoin: round; }
.zips path[stroke="none"] { stroke: none; }
.credit { font-family: "Liberation Sans", sans-serif; font-size: 16px; fill: #555; }
.heat {
  width: 772px;
  table-layout: fixed;
  border-collapse: collapse;
  border-bottom: 1px solid #c8c8c8;
}
.heat tr { height: 27px; }
.heat th { padding: 0; font-weight: 400; color: #222; white-space: nowrap; line-height: 20px; font-size: 18px; }
.heat th:first-child { width: 100px; padding-left: 6px; text-align: left; }
.heat td { padding: 1px 4px 0 0; text-align: right; color: #1c1c1c; font-weight: 400; line-height: 20px; font-size: 18px; letter-spacing: -.05px; }
.heat .cond { height: 30px; }
.heat .cond th { vertical-align: bottom; padding-bottom: 3px; }
.heat .head { height: 25px; border-bottom: 1px solid #c8c8c8; }
.tip {
  position: absolute;
  left: 266px;
  top: 461px;
  width: 398px;
  height: 134px;
  padding: 11px 0 0 11px;
  display: grid;
  grid-template-columns: 261px 1fr;
  grid-auto-rows: 28px;
  line-height: 28px;
  background: #fff;
  border: 1px solid #d0d0d0;
  box-shadow: 2px 2px 3px rgba(0, 0, 0, .25);
  font-size: 18.5px;
  letter-spacing: .95px;
  color: #666;
  font-weight: 300;
  white-space: nowrap;
}
.tip b { color: #222; font-weight: 600; font-size: 18.5px; letter-spacing: .5px; }
.tabs { height: 45px; display: flex; background: #efefef; color: #222; font-size: 18px; line-height: 44px; white-space: nowrap; }
.tabs > span { padding-left: 8px; border-right: 1px solid #ddd; }
.tabs .w1 { width: 107px; }
.tabs .w2 { width: 56px; }
.tabs .w3 { width: 121px; }
.tabs .w4 { width: 133px; }
.tabs .w5 { width: 96px; }
.tabs .w6 { width: 97px; }
.tabs .w7 { width: 96px; }
.tabs .on { width: 193px; display: flex; align-items: center; gap: 6px; padding: 0 0 2px 9px; background: #fff; color: #000; font-weight: 700; letter-spacing: -.3px; line-height: 42px; }
.tools { margin-left: auto; }
```
